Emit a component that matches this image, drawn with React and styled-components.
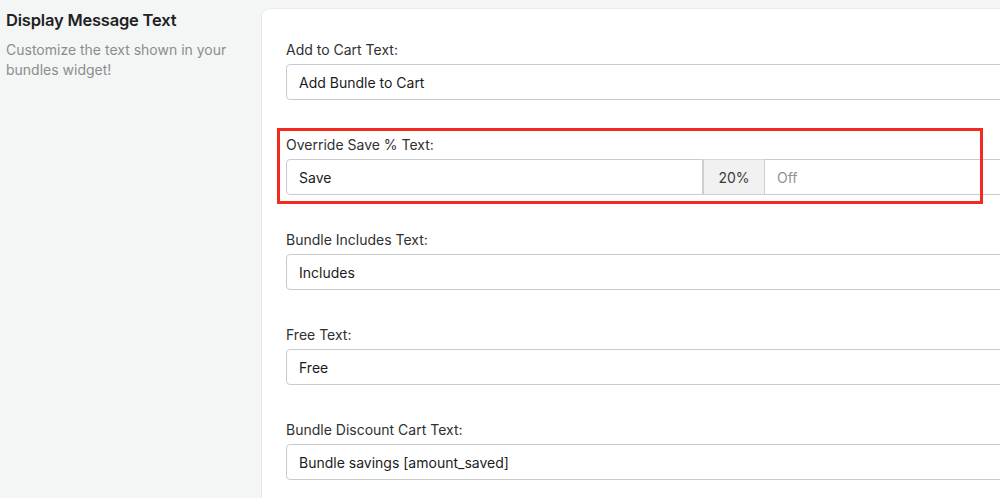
import React from 'react';
import styled, { createGlobalStyle } from 'styled-components';

const GlobalStyle = createGlobalStyle`
  body {
    margin: 0;
    background: #f4f6f6;
    font-family: Inter, "Liberation Sans", Arial, sans-serif;
    color: #202223;
    overflow: hidden;
  }
`;

const Page = styled.div`
  display: flex;
  align-items: flex-start;
  width: 1000px;
  height: 498px;
  overflow: hidden;
`;

const Aside = styled.div`
  flex: 0 0 262px;
  padding: 8px 0 0 6px;
  box-sizing: border-box;
`;

const Heading = styled.h2`
  margin: 0;
  font-size: 16.5px;
  line-height: 24px;
  font-weight: 600;
  letter-spacing: -0.2px;
  color: #202223;
`;

const Subtext = styled.p`
  margin: 8px 0 0;
  font-size: 14px;
  line-height: 20px;
  color: #8a8d90;
  padding-right: 20px;
`;

const Card = styled.div`
  flex: 0 0 800px;
  margin-top: 9px;
  background: #fff;
  border-radius: 8px 0 0 0;
  box-shadow: 0 0 0 1px rgba(0, 0, 0, 0.04), 0 1px 2px rgba(0, 0, 0, 0.06);
  padding: 31px 24px 40px;
  display: flex;
  flex-direction: column;
  gap: 35px;
`;

const Field = styled.div`
  position: relative;
  display: flex;
  flex-direction: column;
  gap: 4px;
`;

const Label = styled.label`
  font-size: 14px;
  line-height: 20px;
  color: #303030;
`;

const Input = styled.div`
  height: 36px;
  box-sizing: border-box;
  border: 1px solid #c9cccf;
  border-radius: ${(p) => p.$radius || '4px'};
  padding: 0 12px;
  display: flex;
  align-items: center;
  font-size: 14px;
  color: ${(p) => (p.$placeholder ? '#8c9196' : '#1a1c1d')};
  flex: ${(p) => (p.$grow ? '1 1 auto' : `0 0 ${p.$width || 'auto'}`)};
  background: #fff;
  ${(p) => p.$noLeft && 'border-left: none;'}
`;

const Group = styled.div`
  display: flex;
  align-items: flex-start;
`;

const Addon = styled.div`
  flex: 0 0 62px;
  height: 36px;
  box-sizing: border-box;
  border: 1px solid #cfcfcf;
  border-top-color: #d6d6d6;
  background: #f1f1f1;
  display: flex;
  align-items: center;
  justify-content: center;
  font-size: 14px;
  color: #3a3a3a;
`;

const Highlight = styled.div`
  position: absolute;
  top: -7px;
  left: -9px;
  width: 706px;
  height: 76px;
  box-sizing: border-box;
  border: 3px solid #f52a1e;
  pointer-events: none;
`;

const SimpleField = ({ label, value }) => (
  <Field>
    <Label>{label}</Label>
    <Input>{value}</Input>
  </Field>
);

export default function App() {
  return (
    <>
      <GlobalStyle />
      <Page>
        <Aside>
          <Heading>Display Message Text</Heading>
          <Subtext>Customize the text shown in your bundles widget!</Subtext>
        </Aside>
        <Card>
          <SimpleField label="Add to Cart Text:" value="Add Bundle to Cart" />
          <Field>
            <Label>Override Save % Text:</Label>
            <Group>
              <Input $width="417px" $radius="4px 0 0 4px">Save</Input>
              <Addon>20%</Addon>
              <Input $grow $noLeft $radius="0" $placeholder>Off</Input>
            </Group>
            <Highlight />
          </Field>
          <SimpleField label="Bundle Includes Text:" value="Includes" />
          <SimpleField label="Free Text:" value="Free" />
          <SimpleField label="Bundle Discount Cart Text:" value="Bundle savings [amount_saved]" />
        </Card>
      </Page>
    </>
  );
}
